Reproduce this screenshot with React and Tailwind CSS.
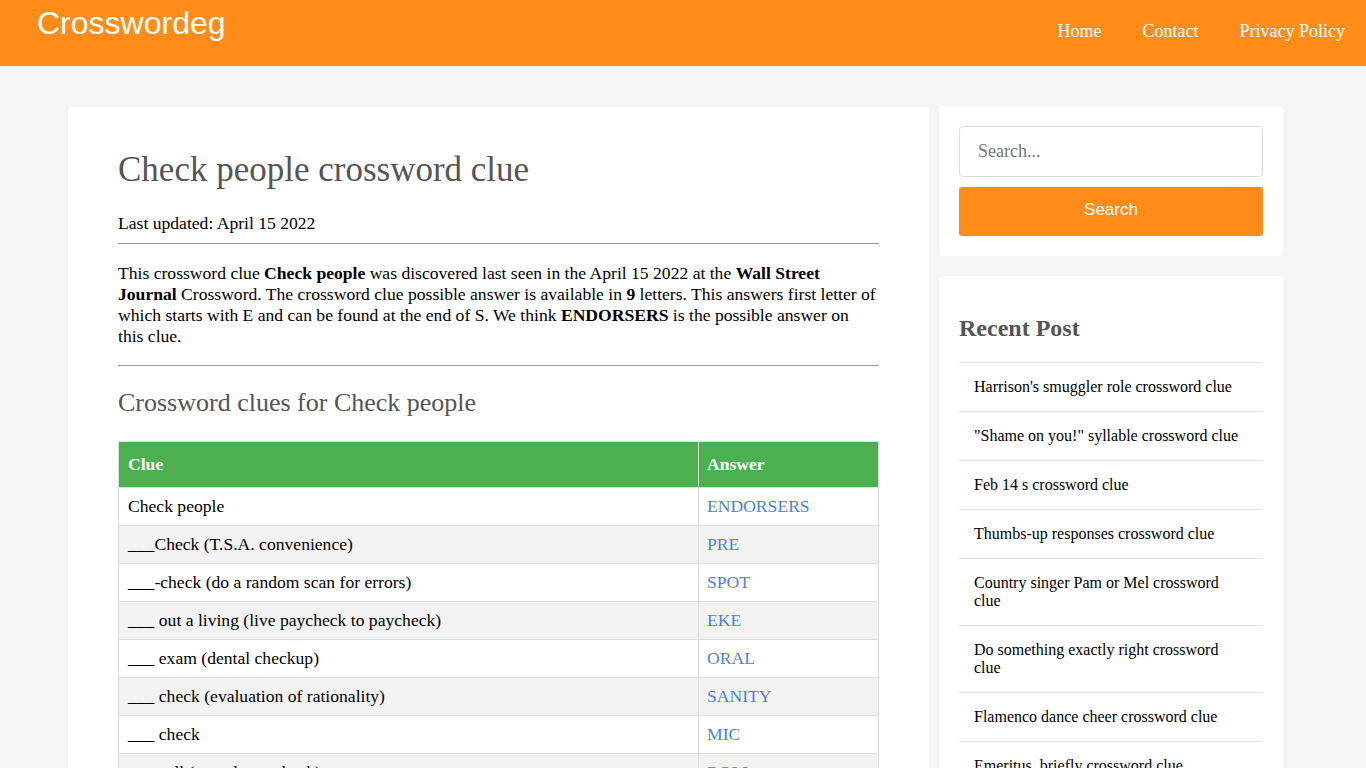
export default function App() {
  const rows = [
    ["Check people", "ENDORSERS"],
    ["___Check (T.S.A. convenience)", "PRE"],
    ["___-check (do a random scan for errors)", "SPOT"],
    ["___ out a living (live paycheck to paycheck)", "EKE"],
    ["___ exam (dental checkup)", "ORAL"],
    ["___ check (evaluation of rationality)", "SANITY"],
    ["___ check", "MIC"],
    ["___ call (attendance check)", "ROLL"],
  ];
  const posts = [
    "Harrison's smuggler role crossword clue",
    "\"Shame on you!\" syllable crossword clue",
    "Feb 14 s crossword clue",
    "Thumbs-up responses crossword clue",
    "Country singer Pam or Mel crossword clue",
    "Do something exactly right crossword clue",
    "Flamenco dance cheer crossword clue",
    "Emeritus, briefly crossword clue",
  ];
  return (
    <div className="min-h-screen bg-[#f5f5f5] font-['Liberation_Serif',serif] text-black">
      <header className="h-[66px] bg-[#ff8c19] flex items-start justify-between">
        <div className="pl-[37px] pt-[4px] text-[32px] leading-[38px] text-white font-['Liberation_Sans',Arial,sans-serif]">
          Crosswordeg
        </div>
        <nav className="flex gap-[41px] pr-[21px] pt-[20px] text-[18px] leading-[22px] text-white">
          <a>Home</a>
          <a>Contact</a>
          <a>Privacy Policy</a>
        </nav>
      </header>

      <div className="ml-[68px] mt-[41px] flex gap-[10px] items-start">
        <main className="w-[861px] bg-white rounded-[4px] px-[50px] pt-[42px] pb-10">
          <h1 className="text-[35px] leading-[42px] text-[#555]">Check people crossword clue</h1>
          <p className="mt-[22px] text-[17.6px] leading-[21px]">Last updated: April 15 2022</p>
          <hr className="mt-[9px] border-0 border-t border-[#999]" />
          <p className="mt-[19px] pr-[2px] text-[17.6px] leading-[21px]">
            This crossword clue <b>Check people</b> was discovered last seen in the April 15 2022 at the <b>Wall Street Journal</b> Crossword. The crossword clue possible answer is available in <b>9</b> letters. This answers first letter of which starts with E and can be found at the end of S. We think <b>ENDORSERS</b> is the possible answer on this clue.
          </p>
          <hr className="mt-[18px] border-0 border-t border-[#999]" />
          <h2 className="mt-[22px] text-[26px] leading-[30px] text-[#555]">Crossword clues for Check people</h2>
          <table className="mt-[23px] w-full border-collapse text-[17.6px]">
            <thead>
              <tr className="bg-[#4caf50] text-white h-[46px]">
                <th className="text-left font-bold pl-[9px] border border-[#ddd] w-[580px]">Clue</th>
                <th className="text-left font-bold pl-[8px] border border-[#ddd]">Answer</th>
              </tr>
            </thead>
            <tbody>
              {rows.map(([c, a], i) => (
                <tr key={i} className={i % 2 === 1 ? "bg-[#f2f2f2] h-[38px]" : "bg-white h-[38px]"}>
                  <td className="pl-[9px] border border-[#ddd]">{c}</td>
                  <td className="pl-[8px] border border-[#ddd] text-[#4a80e8]">{a}</td>
                </tr>
              ))}
            </tbody>
          </table>
        </main>

        <aside className="w-[344px] -mt-px flex flex-col gap-[20px]">
          <div className="bg-white rounded-[4px] p-[20px]">
            <div className="h-[51px] border border-[#ddd] rounded-[4px] flex items-center px-[18px] text-[18px] text-[#777]">
              Search...
            </div>
            <button className="mt-[10px] w-full h-[49px] bg-[#ff8c19] rounded-[3px] text-white text-[17px] leading-[20px] pb-[3px] font-['Liberation_Sans',Arial,sans-serif]">
              Search
            </button>
          </div>
          <div className="bg-white rounded-[4px] px-[20px] pt-[38px]">
            <h3 className="text-[24px] leading-[28px] font-bold text-[#555]">Recent Post</h3>
            <ul className="mt-[20px] border-t border-[#e5e5e5]">
              {posts.map((p) => (
                <li key={p} className="border-b border-[#e5e5e5] py-[15px] pl-[15px] pr-[15px] text-[16px] leading-[18px]">
                  {p}
                </li>
              ))}
            </ul>
          </div>
        </aside>
      </div>
    </div>
  );
}
